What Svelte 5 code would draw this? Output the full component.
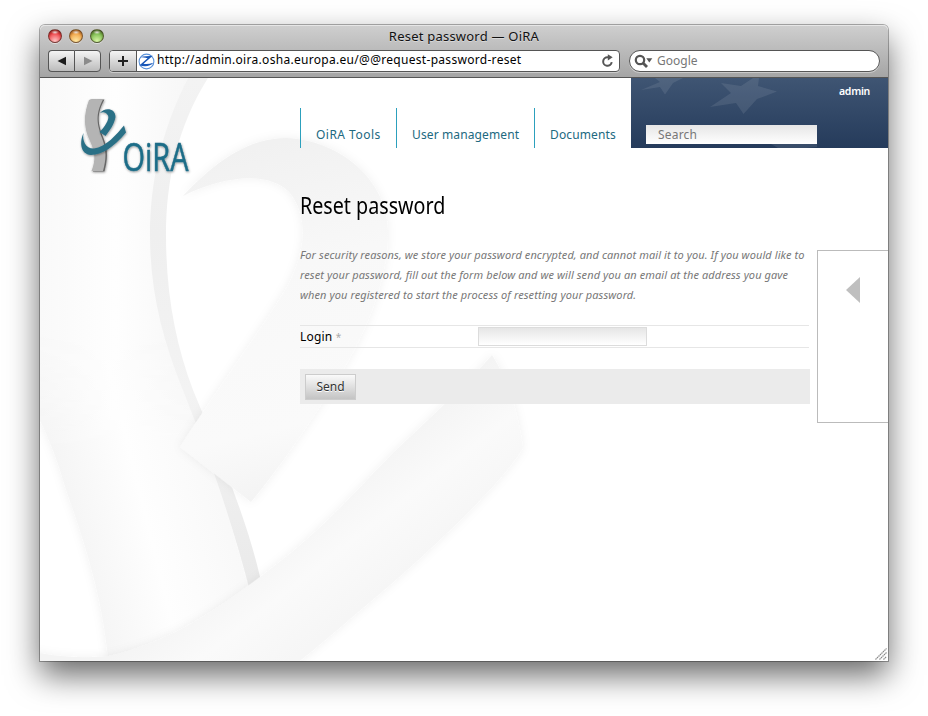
<script>
  const nav = [
    { label: 'OiRA Tools', width: 96, spacing: 0.48 },
    { label: 'User management', width: 138, spacing: 0.12 },
    { label: 'Documents', width: 97, spacing: 0.14 }
  ];
  const intro = [
    'For security reasons, we store your password encrypted, and cannot mail it to you. If you would like to',
    'reset your password, fill out the form below and we will send you an email at the address you gave',
    'when you registered to start the process of resetting your password.'
  ];
</script>

<div class="desktop">
  <div class="window">
    <header class="chrome">
      <div class="titlebar">
        <div class="lights"><i class="red"></i><i class="amber"></i><i class="green"></i></div>
        <span class="title">Reset password — OiRA</span>
      </div>
      <div class="toolbar">
        <div class="history">
          <button aria-label="Back"><svg width="10" height="10" viewBox="0 0 10 10"><path d="M.5 5 9 .7v8.600z" fill="#1c1c1c" /></svg></button>
          <button aria-label="Forward"><svg width="10" height="10" viewBox="0 0 10 10"><path d="M9.500 5 1 .7v8.600z" fill="#8b8b8b" /></svg></button>
        </div>
        <div class="address">
          <button class="plus" aria-label="Add bookmark"><svg width="12" height="12" viewBox="0 0 12 12"><path d="M1 6h10M6 1v10" stroke="#222" stroke-width="2" /></svg></button>
          <svg class="favicon" width="17" height="17" viewBox="0 0 17 17">
            <circle cx="8.500" cy="8.500" r="7.400" fill="#fff" stroke="#5b93da" stroke-width="1.100" />
            <path d="M2 4.200C6 3.300 10 3 14.800 2.800L5.500 10.800C9 11.300 12 10.800 15.300 9.800 13 13.500 6 14 1.600 12.300L9.600 5.200C7 4.500 4 4.400 2 4.200Z" fill="#1857b8" />
          </svg>
          <span class="url">http://admin.oira.osha.europa.eu/@@request-password-reset</span>
          <svg class="reload" width="13" height="14" viewBox="0 0 13 14">
            <path d="M10.700 8.200A4.300 4.300 0 1 1 6.800 3.200H8" fill="none" stroke="#555" stroke-width="2" />
            <path d="M6.800.2 11.700 3.300 6.800 6.500Z" fill="#555" />
          </svg>
        </div>
        <div class="google">
          <svg width="20" height="15" viewBox="0 0 20 15">
            <circle cx="6" cy="6" r="4.200" fill="none" stroke="#555" stroke-width="2.200" />
            <path d="m9 9 4 4" stroke="#555" stroke-width="2.800" />
            <path d="M12.300 4.300h6l-3 4.200z" fill="#555" />
          </svg>
          <span>Google</span>
        </div>
      </div>
    </header>

    <main class="page">
      <svg class="backdrop" width="848" height="583" viewBox="40 78 848 583" aria-hidden="true">
        <defs>
          <linearGradient id="spine" x1="40" x2="190" y1="0" y2="0" gradientUnits="userSpaceOnUse">
            <stop offset="0" stop-color="#f9f9f9" /><stop offset=".5" stop-color="#fefefe" /><stop offset="1" stop-color="#f7f7f7" />
          </linearGradient>
          <linearGradient id="spineLow" x1="75" y1="540" x2="235" y2="500" gradientUnits="userSpaceOnUse">
            <stop offset="0" stop-color="#f5f5f5" /><stop offset=".45" stop-color="#fefefe" /><stop offset="1" stop-color="#f8f8f8" />
          </linearGradient>
          <linearGradient id="lowFade" x1="0" y1="330" x2="0" y2="450" gradientUnits="userSpaceOnUse">
            <stop offset="0" stop-color="#000" /><stop offset="1" stop-color="#fff" />
          </linearGradient>
          <mask id="lowMask"><rect x="0" y="0" width="888" height="700" fill="url(#lowFade)" /></mask>
          <linearGradient id="edge" x1="0" y1="78" x2="0" y2="600" gradientUnits="userSpaceOnUse">
            <stop offset="0" stop-color="#f3f3f3" /><stop offset=".3" stop-color="#efefef" /><stop offset=".6" stop-color="#f3f3f3" /><stop offset="1" stop-color="#e9e9e9" />
          </linearGradient>
          <linearGradient id="hook" x1="200" y1="160" x2="280" y2="500" gradientUnits="userSpaceOnUse">
            <stop offset="0" stop-color="#f1f1f1" /><stop offset=".35" stop-color="#f8f8f8" /><stop offset=".8" stop-color="#fafafa" /><stop offset="1" stop-color="#f3f3f3" />
          </linearGradient>
          <linearGradient id="sweep" x1="350" y1="470" x2="420" y2="560" gradientUnits="userSpaceOnUse">
            <stop offset="0" stop-color="#f4f4f4" /><stop offset=".5" stop-color="#fafafa" /><stop offset="1" stop-color="#f6f6f6" />
          </linearGradient>
          <filter id="soft" x="-10%" y="-10%" width="120%" height="120%">
            <feDropShadow dx="0" dy="0" stdDeviation="5" flood-color="#000" flood-opacity=".06" />
          </filter>
        </defs>
        <g filter="url(#soft)">
          <path d="M20 60H197C160 130 150 185 150 235C150 290 162 338 182 388C205 445 232 520 251 600L109 670C105 620 95 570 66 490C58 462 50 440 35 410Z" fill="url(#spine)" />
        </g>
        <path d="M20 60H197C160 130 150 185 150 235C150 290 162 338 182 388C205 445 232 520 251 600L109 670C105 620 95 570 66 490C58 462 50 440 35 410Z" fill="url(#spineLow)" mask="url(#lowMask)" />
        <path d="M188 78H208C178 125 166 180 166 235C166 295 176 345 193 390C220 455 247 520 260 577V600L251 595C232 520 205 445 182 388C162 338 150 290 150 235C150 185 160 133 188 78Z" fill="url(#edge)" />
        <path filter="url(#soft)" d="M183 196C213 164 247 138 286 138C340 140 388 180 388 232C388 300 345 370 321 405C298 440 273 476 251 502L180 447C215 392 258 335 287 287C308 248 307 215 290 193C271 172 228 174 183 196Z" fill="url(#hook)" />
        <path filter="url(#soft)" d="M492 355C508 380 518 410 523 448C505 480 430 553 357 613C335 632 315 649 296 664H20V648C45 656 80 659 109 656C165 643 207 617 260 577C321 532 350 497 393 453C430 418 465 386 492 355Z" fill="url(#sweep)" />
      </svg>

      <div class="top">
        <svg class="logo" width="120" height="84" viewBox="75 93 120 84" role="img" aria-label="OiRA">
          <defs>
            <filter id="lift" x="-10%" y="-10%" width="125%" height="125%">
              <feDropShadow dx=".5" dy="1" stdDeviation="1" flood-color="#000" flood-opacity=".4" />
            </filter>
          </defs>
          <g filter="url(#lift)">
            <path d="M92.500 99.500h12C96 115 98 124 103.500 138C108.500 151 107.500 160 104.500 171.500H93C97 160 96 152 91 141C84 127 84 114 90 100Z" fill="#666" />
            <path d="M91 99.300Q97 98.500 103 99.500C95 115 97 124 102 138C107 151 106 160 103 171H91.500C96 160 95 152 90 141C83 127 84 113 89 100Z" fill="#b4b4b4" />
          </g>
          <g fill="#2b6f86" filter="url(#lift)">
            <path d="M100 113C104 107.500 115.500 107.500 115.500 117C114.500 124 110 130 105.500 136L99.500 132C104 128 110 119 108 115.500C106 112 103 111.500 100 113Z" />
            <path d="M83.500 133C82 141 86 149 94 148.500C106 147 117 134 124 125.500L126 132.500C113 148 102 154.500 91 155C80 154 79.500 142 83.500 133Z" />
          </g>
          <text x="122.500" y="171" font-family="Open Sans, Noto Sans, sans-serif" font-size="38" fill="#1d6d88" stroke="#1d6d88" stroke-width=".5" textLength="66" lengthAdjust="spacingAndGlyphs" filter="url(#lift)">OiRA</text>
        </svg>
        <nav>
          {#each nav as item}
            <a href="#top" style:width="{item.width}px" style:letter-spacing="{item.spacing}px">{item.label}</a>
          {/each}
        </nav>
        <section class="user">
          <svg class="stars" width="257" height="70" viewBox="631 78 257 70" aria-hidden="true">
            <g fill="#fff" fill-opacity=".09">
              <path d="M641 90 660 82 655 78H683L673 83 665 94.500 660 87Z" />
              <path d="M721 83 741 86 753 78H759L758 86 777 91.500 757 99 743.500 114 736 103 710 107 731 93Z" />
              <path d="M771 144H817V147L806 148H778Z" />
            </g>
          </svg>
          <span class="who">admin</span>
          <div class="search">Search</div>
        </section>
      </div>

      <div class="body">
        <section class="content">
          <h1>Reset password</h1>
          <p>
            {#each intro as line}<span>{line}</span>{/each}
          </p>
          <div class="field"><span class="label">Login <sup>*</sup></span><input aria-label="Login" /></div>
          <div class="actions"><button class="send">Send</button></div>
        </section>
        <aside>
          <svg width="15" height="28" viewBox="0 0 15 28"><path d="M0 14 14 1V27Z" fill="#bfbfbf" /></svg>
        </aside>
      </div>
      <svg class="grip" width="12" height="12" viewBox="0 0 12 12"><path d="M.5 11.500l11-11M4.500 11.500l7-7M8.500 11.500l3-3" stroke="#888" stroke-width="1.200" stroke-dasharray="1.500 .6" /></svg>
    </main>
  </div>
</div>

<style>
  :global(body) { background: #fff; }
  .desktop {
    box-sizing: border-box; width: 928px; height: 716px; padding: 25px 40px; overflow: hidden;
    font-family: 'Noto Sans', 'Open Sans', sans-serif;
  }
  .window {
    width: 848px; height: 636px; display: flex; flex-direction: column; border-radius: 5px 5px 0 0;
    box-shadow: 0 0 0 1px rgba(0, 0, 0, .3), 0 14px 32px rgba(0, 0, 0, .6);
  }
  button { padding: 0; margin: 0; border: 0; background: none; font: inherit; display: flex; align-items: center; justify-content: center; }
  .chrome {
    box-sizing: border-box; height: 53px; border-bottom: 1px solid #555; border-radius: 5px 5px 0 0;
    background: linear-gradient(#cfcfcf, #a5a5a5); box-shadow: inset 0 1px #e6e6e6; flex: none;
  }
  .titlebar { height: 25px; display: grid; grid-template-columns: 100px 1fr 100px; }
  .lights { display: flex; gap: 7px; padding: 4px 0 0 8px; }
  .lights i {
    box-sizing: border-box; width: 14px; height: 14px; border-radius: 50%; border: 1px solid rgba(50, 30, 20, .6);
    box-shadow: 0 1px rgba(255, 255, 255, .5), inset 0 2px 2px rgba(60, 20, 0, .3);
  }
  .red { background: radial-gradient(ellipse 4px 2px at 50% 18%, #fff, transparent), radial-gradient(circle at 50% 90%, #ffc4c4, #ee4146 65%, #b52329); }
  .amber { background: radial-gradient(ellipse 4px 2px at 50% 18%, #fff, transparent), radial-gradient(circle at 50% 90%, #ffe9a4, #f0a144 65%, #c27123); }
  .green { background: radial-gradient(ellipse 4px 2px at 50% 18%, #fff, transparent), radial-gradient(circle at 50% 90%, #d8f6a5, #78b94c 65%, #427d2b); }
  .title { text-align: center; font-size: 13px; line-height: 23px; color: #111; letter-spacing: .22px; text-shadow: 0 1px rgba(255, 255, 255, .4); }
  .toolbar { display: flex; height: 21px; padding-left: 8px; }
  .history { display: flex; margin-right: 8px; }
  .history button, .plus {
    box-sizing: border-box; width: 27px; height: 22px; border: 1px solid #555; background: linear-gradient(#f4f4f4, #bcbcbc);
  }
  .history button:first-child { border-radius: 4px 0 0 4px; border-right: 0; width: 26px; }
  .history button:last-child { border-radius: 0 4px 4px 0; }
  .address {
    box-sizing: border-box; width: 511px; height: 22px; display: flex; align-items: center; background: #fff;
    border: 1px solid #555; border-radius: 4px; margin-right: 9px; overflow: hidden; box-shadow: 0 1px rgba(255, 255, 255, .4);
  }
  .plus { border-width: 0 1px 0 0; height: 20px; flex: none; }
  .favicon { margin: 0 0 0 1px; flex: none; }
  .url { flex: 1; font-size: 12px; line-height: 18px; padding-bottom: 2px; color: #000; margin-left: 2px; letter-spacing: .3px; white-space: nowrap; }
  .reload { margin-right: 5px; }
  .google {
    box-sizing: border-box; width: 251px; height: 22px; border: 1px solid #555; border-radius: 11px; background: #fff;
    display: flex; align-items: center; padding-left: 4px; gap: 3px; font-size: 12px; color: #777; box-shadow: 0 1px rgba(255, 255, 255, .4);
  }
  .google span { padding-bottom: 2px; }

  .page { position: relative; height: 583px; background: #fff; overflow: hidden; }
  .backdrop { position: absolute; left: 0; top: 0; }
  .top, .body { position: relative; display: flex; }
  .top { height: 102px; }
  .logo { flex: none; margin: 15px 105px 0 35px; overflow: visible; }
  nav { display: flex; margin-top: 30px; height: 40px; flex: none; }
  nav a {
    box-sizing: border-box; border-left: 1px solid #2ca0bd; padding: 18px 0 0 15px; font-size: 12px; line-height: 18px;
    color: #21697f; text-decoration: none; white-space: nowrap;
  }
  .user { position: relative; width: 257px; height: 70px; flex: none; background: linear-gradient(#3f5573, #253b5b); box-sizing: border-box; padding: 5px 18px 0 15px; }
  .stars { position: absolute; left: 0; top: 0; }
  .who { display: block; text-align: right; color: #fff; font-size: 10.500px; font-weight: 600; line-height: 16px; letter-spacing: -.3px; }
  .search {
    position: relative; width: 159px; height: 19px; margin-top: 26px; padding-left: 12px; background: linear-gradient(#e6e6e6, #fff);
    color: #777; font-size: 12px; line-height: 20px; letter-spacing: .2px;
  }
  .content { width: 510px; margin-left: 260px; flex: none; }
  h1 { margin: 9px 0 0; font-size: 24px; line-height: 32px; font-weight: 400; color: #000; transform: scaleX(.82); transform-origin: left; white-space: nowrap; }
  p { margin: 24px 0 19px; font-size: 11px; line-height: 20px; font-style: italic; color: #777; letter-spacing: .09px; }
  p span { display: block; white-space: nowrap; }
  .field {
    box-sizing: border-box; width: 509px; height: 23px; border: solid #e6e6e6; border-width: 1px 0; display: flex; align-items: center;
    font-size: 12px; color: #000; margin-top: 20px;
  }
  .label { width: 178px; letter-spacing: .2px; line-height: 21px; }
  sup { font-size: 10px; color: #aaa; vertical-align: 0; line-height: 0; }
  input { box-sizing: border-box; width: 169px; height: 19px; border: 1px solid #dcdcdc; background: linear-gradient(#e6e6e6, #fff); padding: 0; margin: 0; }
  .actions { box-sizing: border-box; height: 35px; margin-top: 21px; padding: 5px; background: #ebebeb; }
  .send { box-sizing: border-box; width: 51px; height: 26px; border: 1px solid #ccc; background: linear-gradient(#fafafa, #c4c4c4); font-size: 12px; line-height: 18px; padding-bottom: 1px; color: #333; text-shadow: 0 1px #fff; }
  aside { box-sizing: border-box; width: 71px; height: 173px; margin: 70px 0 0 7px; border: 1px solid #bbb; border-right: 0; padding: 25px 0 0 28px; flex: none; }
  .grip { position: absolute; right: 1px; bottom: 1px; }
</style>
